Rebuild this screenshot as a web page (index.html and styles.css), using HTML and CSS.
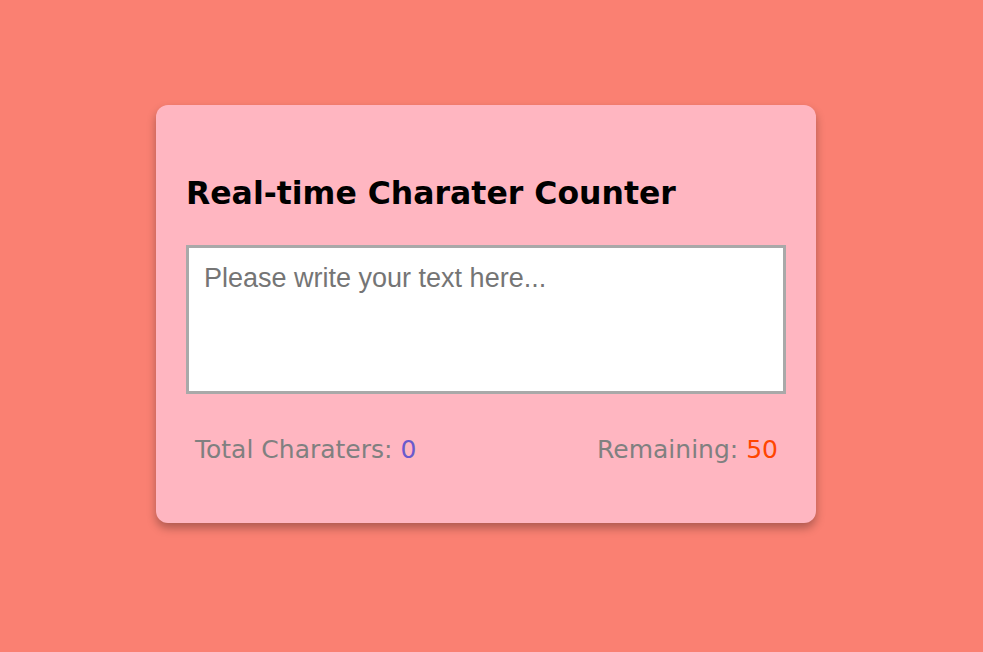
FILE: index.html
```html
<!DOCTYPE html>
<html lang="en">
<head>
<meta charset="utf-8">
<title>Real-time Character Counter</title>
<link rel="stylesheet" href="styles.css">
</head>
<body>
<main class="page">
  <section class="card">
    <h1 class="title">Real-time Charater Counter</h1>
    <textarea class="input" placeholder="Please write your text here..."></textarea>
    <div class="stats">
      <p class="stat">Total Charaters: <span class="total">0</span></p>
      <p class="stat">Remaining: <span class="remaining">50</span></p>
    </div>
  </section>
</main>
</body>
</html>
```
FILE: styles.css
```css
html, body {
  margin: 0;
  padding: 0;
}
body {
  background: #fa8072;
  min-height: 652px;
  font-family: "Comic Sans MS", "DejaVu Sans", sans-serif;
}
.page {
  display: flex;
  justify-content: center;
  padding: 105px 11px 0 0;
}
.card {
  width: 600px;
  padding: 30px 30px 56px;
  background: #ffb6c1;
  border-radius: 12px;
  box-shadow: 0 5px 10px rgba(0, 0, 0, 0.3);
}
.title {
  margin: 40px 0 34px;
  font-size: 31.5px;
  font-weight: bold;
  color: #000;
  line-height: 36px;
}
.input {
  display: block;
  box-sizing: border-box;
  width: 600px;
  height: 149px;
  padding: 15px;
  border: 3px solid #a9a9a9;
  background: #fff;
  font-family: "Liberation Sans", Arial, sans-serif;
  font-size: 27px;
  resize: none;
  outline: none;
}
.input::placeholder {
  color: #757575;
}
.stats {
  display: flex;
  justify-content: space-between;
  padding: 0 8px 0 9px;
  margin-top: 39px;
}
.stat {
  margin: 0;
  font-size: 25px;
  line-height: 34px;
  color: #808080;
}
.total {
  color: #6a5acd;
}
.remaining {
  color: #ff4500;
}
```
